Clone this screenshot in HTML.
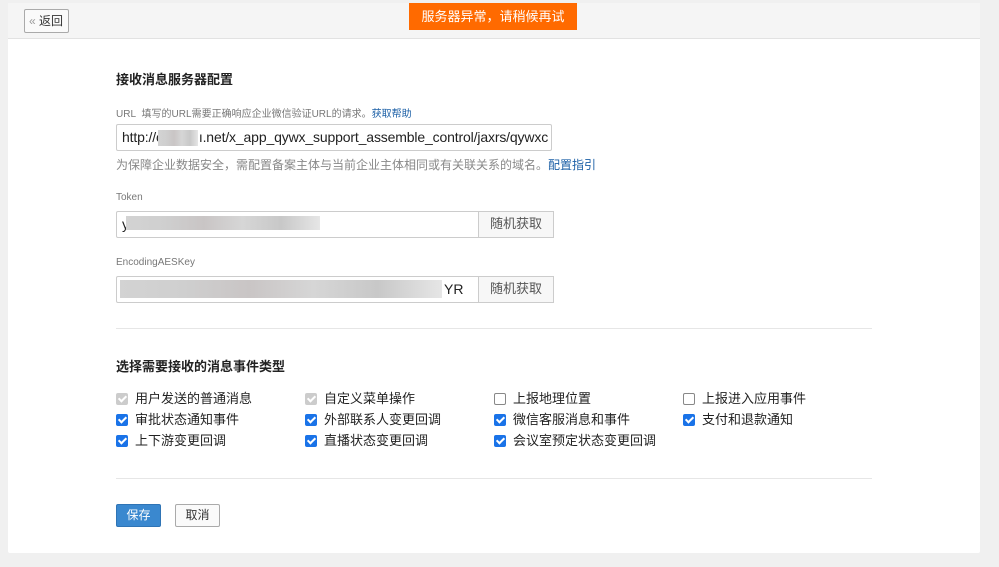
<!DOCTYPE html>
<html><head><meta charset="utf-8"><style>
*{box-sizing:border-box;margin:0;padding:0}
body{width:999px;height:567px;background:#f0f0f0;font-family:"Liberation Sans","Noto Sans CJK SC",sans-serif;position:relative;overflow:hidden;color:#222}
.card{position:absolute;left:8px;top:3px;width:972px;height:550px;background:#fff;border-radius:2px}
.hdr{position:absolute;left:8px;top:3px;width:972px;height:36px;background:#f5f5f5;border-bottom:1px solid #e2e2e2}
.back{position:absolute;left:24px;top:9px;width:45px;height:24px;border:1px solid #aaa;border-radius:2px;background:#fafafa;font-size:12px;line-height:22px;padding-left:4px;color:#333}
.back span{color:#999}
.toast{position:absolute;left:409px;top:3px;width:168px;height:27px;background:#ff6a00;color:#fff;font-size:13px;text-align:center;line-height:27px}
.a{position:absolute;white-space:nowrap}
.h{font-size:13px;font-weight:bold;color:#222}
.lbl{font-size:10px;color:#777}
.input{position:absolute;border:1px solid #ccc;background:#fff;border-radius:2px;font-size:14px;line-height:24px;padding-left:5px;color:#222;overflow:hidden;white-space:nowrap}
.btn{position:absolute;border:1px solid #ccc;background:#f7f7f7;font-size:13px;color:#555;text-align:center;line-height:24px}
.hint{font-size:12px;color:#888}
.blur{position:absolute;height:14px;background:linear-gradient(90deg,#d3d3d3,#cfcfcf 20%,#c9c5c5 40%,#d6d6d6 60%,#c8c8c8 80%,#e6e6e6)}
.hr{position:absolute;left:116px;width:756px;height:1px;background:#e6e6e6}
.cb{position:absolute;font-size:13px;color:#222;line-height:16px;padding-left:19px}
.cb i{position:absolute;left:0;top:2px;width:12px;height:12px;border-radius:2px;background:#1a73e8}
.cb i:after{content:"";position:absolute;left:4px;top:1px;width:3px;height:6px;border:solid #fff;border-width:0 2px 2px 0;transform:rotate(45deg)}
.cb i.g{background:#ccc}
.cb i.e{background:#fff;border:1px solid #888}
.cb i.e:after{display:none}
</style></head><body>
<div class="card"></div>
<div class="hdr"></div>
<div class="back"><span>«</span> 返回</div>
<div class="toast">服务器异常，请稍候再试</div>

<div class="a h" style="left:116px;top:69px">接收消息服务器配置</div>
<div class="a lbl" style="left:116px;top:105px">URL&nbsp; 填写的URL需要正确响应企业微信验证URL的请求。<span style="color:#1b5fa6">获取帮助</span></div>
<div class="input" style="left:116px;top:124px;width:436px;height:27px;font-size:14px;letter-spacing:-0.15px">http://c<span style="display:inline-block;width:36px"></span>ı.net/x_app_qywx_support_assemble_control/jaxrs/qywxc</div>
<div class="blur" style="left:158px;top:130px;width:40px;height:16px"></div>
<div class="a hint" style="left:116px;top:156px">为保障企业数据安全，需配置备案主体与当前企业主体相同或有关联关系的域名。<span style="color:#1b5fa6">配置指引</span></div>

<div class="a lbl" style="left:116px;top:192px">Token</div>
<div class="input" style="left:116px;top:211px;width:438px;height:27px">y</div>
<div class="btn" style="left:478px;top:211px;width:76px;height:27px">随机获取</div>
<div class="blur" style="left:126px;top:216px;width:194px"></div>

<div class="a lbl" style="left:116px;top:257px">EncodingAESKey</div>
<div class="input" style="left:116px;top:276px;width:438px;height:27px"><span style="position:absolute;left:327px">YR</span></div>
<div class="btn" style="left:478px;top:276px;width:76px;height:27px">随机获取</div>
<div class="blur" style="left:120px;top:280px;width:322px;height:18px"></div>

<div class="hr" style="top:328px"></div>
<div class="a h" style="left:116px;top:356px">选择需要接收的消息事件类型</div>

<div class="cb" style="left:116px;top:391px"><i class="g"></i>用户发送的普通消息</div>
<div class="cb" style="left:305px;top:391px"><i class="g"></i>自定义菜单操作</div>
<div class="cb" style="left:494px;top:391px"><i class="e"></i>上报地理位置</div>
<div class="cb" style="left:683px;top:391px"><i class="e"></i>上报进入应用事件</div>
<div class="cb" style="left:116px;top:412px"><i></i>审批状态通知事件</div>
<div class="cb" style="left:305px;top:412px"><i></i>外部联系人变更回调</div>
<div class="cb" style="left:494px;top:412px"><i></i>微信客服消息和事件</div>
<div class="cb" style="left:683px;top:412px"><i></i>支付和退款通知</div>
<div class="cb" style="left:116px;top:433px"><i></i>上下游变更回调</div>
<div class="cb" style="left:305px;top:433px"><i></i>直播状态变更回调</div>
<div class="cb" style="left:494px;top:433px"><i></i>会议室预定状态变更回调</div>

<div class="hr" style="top:478px"></div>
<div class="a" style="left:116px;top:504px;width:45px;height:23px;background:#3a88cf;border:1px solid #2f74b5;border-radius:2px;color:#fff;font-size:12px;text-align:center;line-height:21px">保存</div>
<div class="a" style="left:175px;top:504px;width:45px;height:23px;background:#fafafa;border:1px solid #aaa;border-radius:2px;color:#333;font-size:12px;text-align:center;line-height:21px">取消</div>
</body></html>
